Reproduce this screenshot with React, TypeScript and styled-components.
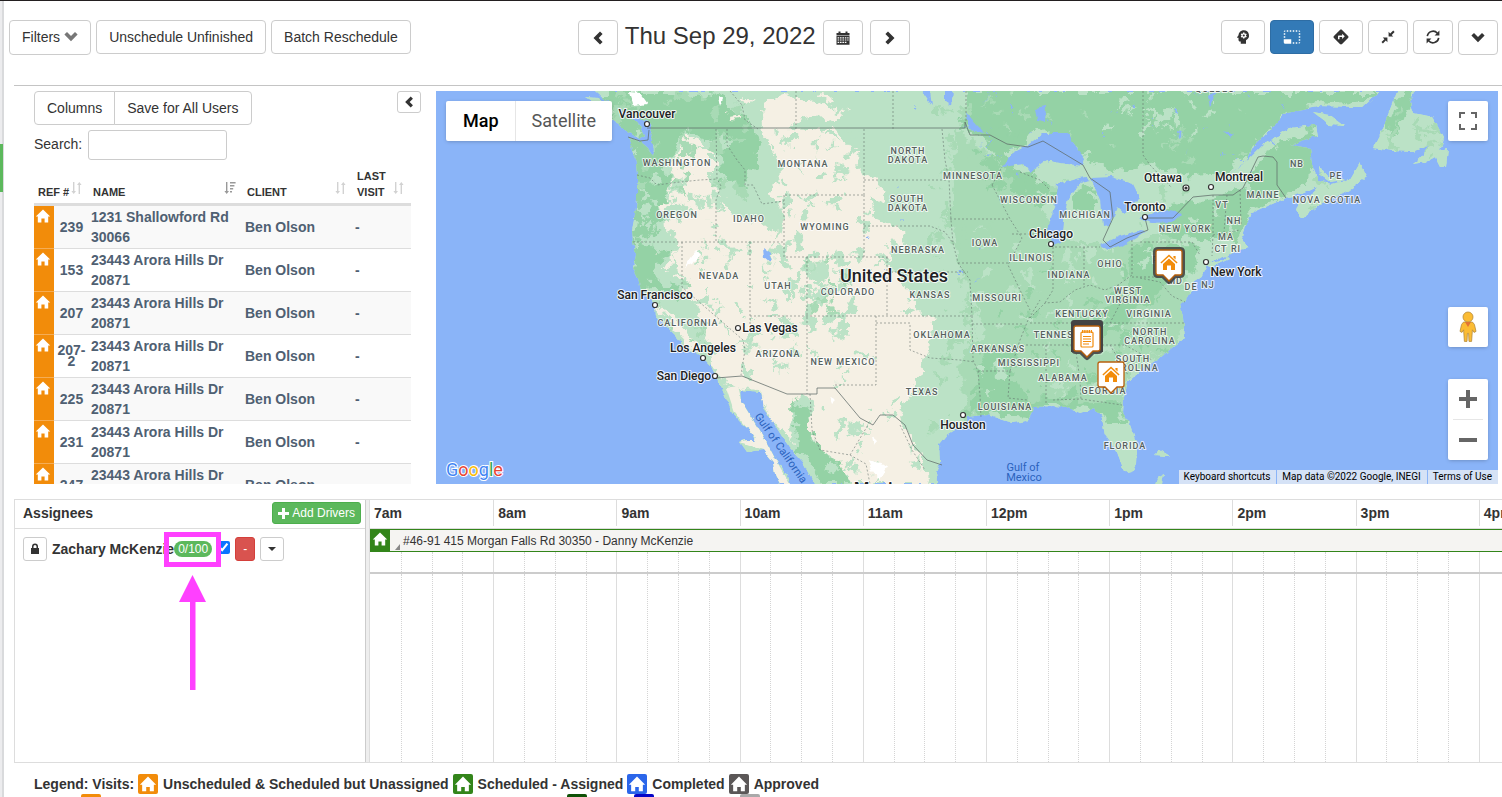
import React from 'react';
import styled, { createGlobalStyle, css } from 'styled-components';
import { MdPsychology, MdPhotoSizeSelectSmall, MdDirections } from 'react-icons/md';

const GlobalStyle = createGlobalStyle`
  *, *::before, *::after { box-sizing: border-box; }
  html, body { margin: 0; background: #fff; }
  body, button, input {
    font-family: "Liberation Sans", Arial, Helvetica, sans-serif;
    font-size: 14px;
    line-height: 20px;
    color: #333;
  }
  body { overflow-x: hidden; }
`;

/* ---------- page frame ---------- */

const Page = styled.div`
  display: flex;
  min-height: 100vh;
  border-top: 1px solid #231f20;
`;
const Rail = styled.aside`
  flex: none;
  width: 4px;
  padding-top: 143px;
  background: #ececee;
  border-right: 2px solid #d9dadc;
`;
const RailMarker = styled.div`
  width: 3px;
  height: 48px;
  background: #5cb85c;
  position: relative;
`;
const Main = styled.main`
  flex: 1;
  min-width: 0;
  overflow: hidden;
`;

/* ---------- buttons ---------- */

const Button = styled.button<{ $active?: boolean; $tall?: boolean; $square?: boolean }>`
  display: inline-flex;
  align-items: center;
  justify-content: center;
  gap: 4px;
  height: ${p => (p.$tall ? 35 : 34)}px;
  padding: 0 12px 1px;
  ${p => p.$square && css`width: 40px; padding: 0;`}
  border: 1px solid ${p => (p.$active ? '#2e6da4' : '#ccc')};
  border-radius: 4px;
  background: ${p => (p.$active ? '#337ab7' : '#fff')};
  color: ${p => (p.$active ? '#fff' : '#333')};
  white-space: nowrap;
`;
const SmallButton = styled.button<{ $tone?: 'danger' | 'plain'; $width: number }>`
  display: inline-flex;
  align-items: center;
  justify-content: center;
  flex: none;
  width: ${p => p.$width}px;
  height: 24px;
  padding: 0;
  border: 1px solid ${p => (p.$tone === 'danger' ? '#d43f3a' : '#ccc')};
  border-radius: 3px;
  background: ${p => (p.$tone === 'danger' ? '#d9534f' : '#fff')};
  color: ${p => (p.$tone === 'danger' ? '#fff' : '#333')};
  font-size: 12px;
`;
const ButtonGroup = styled.div`
  display: flex;
  ${Button}:first-child { border-radius: 4px 0 0 4px; }
  ${Button}:last-child { border-radius: 0 4px 4px 0; margin-left: -1px; }
`;

/* ---------- toolbar ---------- */

const Toolbar = styled.header`
  display: grid;
  grid-template-columns: 29fr auto 30fr;
  height: 84px;
  padding: 19px 4px 0 5px;
`;
const ToolGroup = styled.div<{ $end?: boolean }>`
  display: flex;
  align-items: flex-start;
  gap: 5px;
  justify-content: ${p => (p.$end ? 'flex-end' : 'flex-start')};
`;
const DateNav = styled.div`
  display: flex;
  gap: 7px;
`;
const DateTitle = styled.h1`
  margin: 0;
  font-size: 24px;
  line-height: 32px;
  font-weight: 400;
`;

/* ---------- upper area ---------- */

const Upper = styled.section`
  display: flex;
  gap: 15px;
  margin-left: 10px;
  padding: 5px 4px 15px 20px;
  border-top: 1px solid #c4c4c4;
`;
const VisitPanel = styled.div`
  flex: none;
  width: 387px;
  height: 393px;
  overflow: hidden;
`;
const PanelHead = styled.div`
  display: flex;
  align-items: flex-start;
  justify-content: space-between;
`;
const CollapseButton = styled(SmallButton)`
  height: 22px;
`;
const SearchRow = styled.label`
  display: flex;
  gap: 6px;
  margin: 5px 0 8px;
  line-height: 28px;
`;
const SearchInput = styled.input`
  width: 139px;
  height: 30px;
  padding: 4px 8px;
  border: 1px solid #ccc;
  border-radius: 3px;
  background: #fff;
`;
const Table = styled.table`
  width: 377px;
  table-layout: fixed;
  border-collapse: separate;
  border-spacing: 0;
`;
const HeadCell = styled.th`
  padding: 0 7px 3px 4px;
  border-bottom: 3px solid #ddd;
  text-align: left;
  vertical-align: bottom;
`;
const SortButton = styled.button`
  display: flex;
  width: 100%;
  align-items: flex-end;
  justify-content: space-between;
  padding: 0;
  border: 0;
  background: none;
  font-size: 11px;
  line-height: 16px;
  font-weight: 700;
  text-align: left;
  svg { flex: none; margin-bottom: 6px; }
`;
const VisitRow = styled.tr<{ $odd: boolean }>`
  background: ${p => (p.$odd ? '#f9f9f9' : '#fff')};
`;
const Cell = styled.td<{ $center?: boolean }>`
  padding: 1px ${p => (p.$center ? 0 : 2)}px;
  border-bottom: 1px solid #ddd;
  color: #4f6072;
  font-weight: 700;
  line-height: ${p => (p.$center ? 11 : 20)}px;
  text-align: ${p => (p.$center ? 'center' : 'left')};
  vertical-align: middle;
  overflow-wrap: break-word;
`;
const StatusCell = styled.td`
  padding: 2px 2px 0 1px;
  border-bottom: 1px solid #f5ad55;
  background: #f28c0a;
  vertical-align: top;
  line-height: 0;
`;

/* ---------- map ---------- */

const MapBox = styled.div`
  position: relative;
  flex: 1;
  min-width: 0;
  height: 393px;
  overflow: hidden;
  background: #8ab4f8;
  font-family: Roboto, "Liberation Sans", sans-serif;
  button, a { font-family: Roboto, "Liberation Sans", sans-serif; }
`;
const MapSvg = styled.svg`
  display: block;
  width: 100%;
  height: 100%;
`;
const MapTypes = styled.div`
  position: absolute;
  left: 10px;
  top: 10px;
  display: flex;
  border-radius: 2px;
  background: #fff;
  box-shadow: 0 1px 4px -1px rgba(0, 0, 0, 0.3);
`;
const MapTypeButton = styled.button<{ $on?: boolean }>`
  height: 40px;
  padding: 0 16px 0 ${p => (p.$on ? 17 : 16)}px;
  border: 0;
  border-left: ${p => (p.$on ? 0 : '1px solid #e6e6e6')};
  background: none;
  font-size: 18px;
  font-weight: ${p => (p.$on ? 500 : 400)};
  color: ${p => (p.$on ? '#000' : '#565656')};
`;
const MapControls = styled.div`
  position: absolute;
  right: 10px;
  top: 10px;
  display: flex;
  flex-direction: column;
`;
const ControlCard = styled.div<{ $gap?: number }>`
  display: flex;
  flex-direction: column;
  align-items: center;
  width: 40px;
  margin-top: ${p => p.$gap ?? 0}px;
  border-radius: 2px;
  background: #fff;
  box-shadow: 0 1px 4px -1px rgba(0, 0, 0, 0.3);
`;
const ControlButton = styled.button`
  display: flex;
  align-items: center;
  justify-content: center;
  width: 40px;
  height: 40px;
  padding: 0;
  border: 0;
  background: none;
`;
const ControlRule = styled.div`
  width: 30px;
  height: 1px;
  background: #e6e6e6;
`;
const Attribution = styled.div`
  position: absolute;
  right: 0;
  bottom: 0;
  display: flex;
  gap: 1px;
  font-size: 10px;
  line-height: 14px;
`;
const AttributionItem = styled.span`
  padding: 0 6px 0 5px;
  background: rgba(245, 245, 245, 0.7);
  a { color: #000; text-decoration: none; }
  color: #000;
`;

/* ---------- schedule ---------- */

const Schedule = styled.section`
  display: flex;
  height: 264px;
  margin-left: 10px;
  border: 1px solid #ddd;
  border-right: 0;
`;
const Assignees = styled.div`
  position: relative;
  flex: none;
  width: 350px;
`;
const AssigneeHead = styled.div`
  display: flex;
  align-items: center;
  justify-content: space-between;
  height: 29px;
  padding: 0 4px 2px 8px;
  border-bottom: 1px solid #ddd;
  font-weight: 700;
`;
const AddButton = styled.button`
  display: flex;
  align-items: center;
  gap: 3px;
  height: 22px;
  padding: 0 5px;
  border: 1px solid #4cae4c;
  border-radius: 3px;
  background: #5cb85c;
  color: #fff;
  font-size: 12px;
`;
const AssigneeRow = styled.div`
  display: flex;
  align-items: center;
  gap: 5px;
  padding: 8px;
`;
const AssigneeName = styled.label`
  display: flex;
  align-items: center;
  font-weight: 700;
  white-space: nowrap;
`;
const Badge = styled.span`
  height: 16px;
  padding: 0 4px;
  border-radius: 8px;
  background: #5cb85c;
  color: #fff;
  font-size: 12px;
  line-height: 16px;
  font-weight: 400;
`;
const Check = styled.input`
  width: 13px;
  height: 13px;
  margin: 0 0 3px;
  accent-color: #0a75ff;
`;
const HighlightBox = styled.div`
  position: absolute;
  left: 149px;
  top: 32px;
  width: 57px;
  height: 35px;
  border: 5px solid #ff40ff;
`;
const HighlightArrow = styled.svg`
  position: absolute;
  left: 164px;
  top: 75px;
`;
const Splitter = styled.div`
  flex: none;
  width: 5px;
  border-left: 1px solid #ccc;
  border-right: 1px solid #ddd;
  background: #eee;
`;
const Timeline = styled.div`
  flex: 1;
  min-width: 0;
  display: flex;
  flex-direction: column;
  overflow: hidden;
`;
const hourColumns = css`
  display: grid;
  grid-template-columns: repeat(10, 1fr);
  width: 1232px;
`;
const HourHead = styled.div`
  flex: none;
  height: 29px;
  border-bottom: 1px solid #ddd;
`;
const HourLabels = styled.div`
  ${hourColumns}
`;
const HourLabel = styled.div`
  height: 26px;
  padding: 0 4px;
  border-left: 1px solid #ddd;
  font-weight: 700;
  line-height: 26px;
  &:first-child { border-left: 0; }
`;
const Lane = styled.div<{ $grow?: boolean }>`
  display: flex;
  flex: ${p => (p.$grow ? '1' : '0 0 22px')};
  ${p => !p.$grow && css`border-bottom: 2px solid #ccc;`}
`;
const Hours = styled.div`
  flex: none;
  ${hourColumns}
`;
const HourCell = styled.div`
  display: grid;
  grid-template-columns: repeat(4, 1fr);
`;
const Quarter = styled.div`
  border-left: 1px dotted #d4d4d4;
  &:first-child { border-left: 1px solid #ddd; }
  ${HourCell}:first-child &:first-child { border-left: 0; }
`;
const Visit = styled.div`
  display: flex;
  align-items: center;
  flex: none;
  height: 23px;
  border-top: 1px solid #33851a;
  border-bottom: 1px solid #33851a;
  background: #f5f4f2;
  font-size: 12px;
  line-height: 20px;
  white-space: nowrap;
`;
const VisitIcon = styled.div`
  display: flex;
  justify-content: center;
  align-items: center;
  width: 20px;
  height: 21px;
  padding-bottom: 3px;
  background: #33851a;
`;
const ResizeCorner = styled.svg`
  align-self: flex-end;
  margin: 0 3px 1px 5px;
`;

/* ---------- legend ---------- */

const Legend = styled.footer`
  height: 35px;
  padding: 11px 0 0 30px;
  overflow: hidden;
`;
const LegendRow = styled.div`
  display: flex;
  gap: 4px;
  height: 20px;
  font-weight: 700;
  white-space: nowrap;
`;
const LegendItem = styled.span`
  display: flex;
  gap: 5px;
`;
const Swatch = styled.span<{ $color: string; $lead?: number }>`
  display: flex;
  align-items: center;
  justify-content: center;
  flex: none;
  width: 20px;
  height: 20px;
  margin-left: ${p => p.$lead ?? 0}px;
  border-radius: 2px;
  background: ${p => p.$color};
`;

/* ---------- icons ---------- */

type IconProps = { size?: number; color?: string };

const House = ({ size = 16, color = '#fff' }: IconProps) => (
  <svg width={size} height={size} viewBox="0 0 16 16" fill={color} aria-hidden="true">
    <path d="M8 1.4 0.8 8.6h2v5.8h3.6v-3.8h3.2v3.8h3.6V8.6h2z" />
  </svg>
);
const ChevronLeft = ({ size = 14 }: IconProps) => (
  <svg width={size} height={size} viewBox="0 0 14 14" fill="#333" aria-hidden="true">
    <path d="M9 0.5 11.6 3.1 7.7 7l3.9 3.9L9 13.5 2.5 7z" />
  </svg>
);
const ChevronRight = () => (
  <svg width="14" height="14" viewBox="0 0 14 14" fill="#333" aria-hidden="true">
    <path d="M5 0.5 2.4 3.1 6.3 7l-3.9 3.9L5 13.5 11.5 7z" />
  </svg>
);
const ChevronDown = ({ color = '#333' }: IconProps) => (
  <svg width="14" height="14" viewBox="0 0 14 14" fill={color} aria-hidden="true">
    <path d="M0.4 4.6 3 2l4 4 4-4 2.6 2.6L7 11.2z" />
  </svg>
);
const Calendar = () => (
  <svg width="14" height="14" viewBox="0 0 14 14" fill="#333" aria-hidden="true">
    <path d="M0.5 2h2V0.6h2V2h5V0.6h2V2h2v2.4h-13z" />
    <path
      fillRule="evenodd"
      d="M0.5 5h13v8.8h-13zM1.6 6.2v1.2h1.6V6.2zm2.4 0v1.2h1.6V6.2zm2.4 0v1.2H8V6.2zm2.4 0v1.2h1.6V6.2zm2.4 0v1.2h1.4V6.2zM1.6 8.4v1.2h1.6V8.4zm2.4 0v1.2h1.6V8.4zm2.4 0v1.2H8V8.4zm2.4 0v1.2h1.6V8.4zm2.4 0v1.2h1.4V8.4zM1.6 10.8V12h1.6v-1.2zm2.4 0V12h1.6v-1.2zm2.4 0V12H8v-1.2zm2.4 0V12h1.6v-1.2z"
    />
  </svg>
);
const ResizeSmall = () => (
  <svg width="14" height="14" viewBox="0 0 14 14" fill="#333" aria-hidden="true">
    <path d="M7.6 6.4V1.8l1.6 1.6L12.2 0.6l1.4 1.4-2.9 2.9 1.5 1.5zM6.4 7.6H1.8l1.6 1.6L0.5 12.1l1.4 1.4L4.8 10.6l1.6 1.6z" />
  </svg>
);
const Refresh = () => (
  <svg width="14" height="14" viewBox="0 0 14 14" aria-hidden="true">
    <g fill="none" stroke="#333" strokeWidth="1.6">
      <path d="M1.3 6.2A5.8 5.8 0 0 1 11.4 3.2" />
      <path d="M12.7 7.8A5.8 5.8 0 0 1 2.6 10.8" />
    </g>
    <path fill="#333" d="M13.4 0.4v5H8.6zM0.6 13.6v-5h4.8z" />
  </svg>
);
const Lock = () => (
  <svg width="12" height="12" viewBox="0 0 12 12" fill="#333" aria-hidden="true">
    <path fillRule="evenodd" d="M3 5V3.6a3 3 0 0 1 6 0V5h1v6H2V5zm1.5 0h3V3.6a1.5 1.5 0 0 0-3 0z" />
  </svg>
);
const Plus = () => (
  <svg width="11" height="11" viewBox="0 0 11 11" fill="#fff" aria-hidden="true">
    <path d="M4 0h3v4h4v3H7v4H4V7H0V4h4z" />
  </svg>
);
const Caret = () => (
  <svg width="8" height="4" viewBox="0 0 8 4" fill="#333" aria-hidden="true">
    <path d="M0 0h8L4 4z" />
  </svg>
);
const SortBoth = () => (
  <svg width="11" height="12" viewBox="0 0 11 12" fill="#d2d2d2" aria-hidden="true">
    <path d="M2 0h1.4v9H5L2.7 12 0.4 9H2zM7.6 12H9V3h1.6L8.3 0 6 3h1.6z" />
  </svg>
);
const SortActive = () => (
  <svg width="12" height="12" viewBox="0 0 12 12" fill="#999" aria-hidden="true">
    <path d="M2 0h1.4v9H5L2.7 12 0.4 9H2zM6 0h5.6v1.6H6zM6 3h4.4v1.6H6zM6 6h3.2v1.6H6zM6 9h2v1.6H6z" />
  </svg>
);
const FullscreenIcon = () => (
  <svg width="18" height="18" viewBox="0 0 18 18" fill="#666" aria-hidden="true">
    <path d="M0 0h6v2H2v4H0zM12 0h6v6h-2V2h-4zM0 12h2v4h4v2H0zM16 12h2v6h-6v-2h4z" />
  </svg>
);
const Pegman = () => (
  <svg width="18" height="32" viewBox="0 0 18 32" aria-hidden="true">
    <path
      d="M4.6 11h8.8l2 2.4 1.6 7-2 1-1.6-2.6-.8 11.6H10l-.4-8H8.4l-.4 8H5.4L4.6 18.8 3 21.4l-2-1 1.6-7z"
      fill="#fbbc34"
      stroke="#b58a3a"
      strokeWidth="0.8"
    />
    <circle cx="9" cy="6" r="5" fill="#fbbc34" stroke="#b58a3a" strokeWidth="0.8" />
    <path d="M6 11h6l-3 5z" fill="#e27435" />
  </svg>
);
const ZoomIn = () => (
  <svg width="18" height="18" viewBox="0 0 18 18" fill="#666" aria-hidden="true">
    <path d="M7 0h4v7h7v4h-7v7H7v-7H0V7h7z" />
  </svg>
);
const ZoomOut = () => (
  <svg width="18" height="4" viewBox="0 0 18 4" fill="#666" aria-hidden="true">
    <path d="M0 0h18v4H0z" />
  </svg>
);

/* ---------- map drawing ---------- */

const BEIGE = '#f5f0e4';
const LIGHT = '#bbe2c6';
const MID = '#a8dab5';
const DARK = '#94d2a5';
const WATER = '#8ab4f8';

const MAINLAND =
  'M596 91 606 100 618 108 634 116 648 121 652 130 650 138 655 150 653 157 648 148 640 141 630 138 632 150 636 163 637 175 637 200 635 215 632 230 633 242 636 254 633 268 638 278 641 290 648 298 655 305 656 315 662 322 670 330 678 338 686 350 696 352 703 358 711 366 716 377 722 388 728 403 732 413 742 424 750 430 755 440 745 440 740 442 747 452 763 450 773 462 775 474 780 484 790 484 788 476 777 462 767 443 758 428 750 415 742 402 741 390 760 392 763 408 773 422 783 438 790 448 803 462 810 475 815 484 937 484 936 472 940 463 939 445 947 435 963 425 968 418 987 415 997 418 1013 423 1027 421 1031 415 1033 407 1053 406 1067 407 1080 413 1095 408 1102 418 1105 435 1117 452 1123 468 1130 474 1136 465 1137 445 1130 425 1122 412 1123 398 1128 382 1145 367 1160 358 1173 347 1185 338 1183 318 1180 303 1186 300 1192 290 1193 282 1203 275 1207 264 1225 260 1229 255 1238 250 1249 248 1242 238 1245 225 1252 213 1270 205 1286 198 1303 193 1317 186 1312 195 1298 203 1295 211 1302 218 1320 204 1343 194 1367 177 1360 163 1350 180 1332 184 1318 180 1312 165 1310 148 1290 145 1304 140 1317 136 1315 125 1290 128 1263 145 1243 165 1226 176 1246 162 1254 146 1273 127 1287 112 1317 106 1363 107 1380 91Z';
const ISLANDS =
  'M585 97 598 98 612 104 640 125 645 136 640 139 625 130 610 118 597 104ZM1397 91 1383 128 1373 148 1395 151 1413 152 1430 145 1420 158 1412 164 1426 162 1435 157 1440 167 1446 167 1448 148 1440 150 1444 138 1437 125 1432 117 1413 113 1410 104 1414 91ZM1313 112 1330 115 1345 126 1330 125ZM1319 166 1328 176 1345 180 1330 182 1320 175ZM1207 263 1226 256 1229 259 1210 268ZM1155 455 1160 450 1170 456 1164 456ZM1157 478 1164 474 1162 484 1155 484Z';
const ARID =
  'M762 112 772 96 800 98 846 112 830 118 800 122 785 128 837 130 857 152 863 172 885 192 877 218 913 235 890 252 890 268 913 292 918 312 937 318 927 352 917 378 905 405 900 418 913 438 922 458 930 484 855 484 840 470 820 452 806 425 812 400 800 396 790 420 794 440 770 418 763 405 760 392 740 388 716 376 712 350 702 322 693 298 682 278 678 252 667 225 665 205 670 182 677 152 690 132 713 152 713 182 724 197 732 215 758 220 775 235 785 215 772 190 783 170 768 145Z';
const BAJA = 'M726 388 738 386 742 402 750 415 758 428 767 443 777 462 790 484 780 484 763 450 740 442 755 438 734 412Z';
const VALLEY = 'M658 308 664 306 680 325 697 345 700 354 690 350 676 332Z';
const FORESTS = [
  'M596 91 680 91 716 96 738 110 752 126 762 142 755 165 745 190 722 180 714 140 690 128 674 145 668 180 664 215 650 240 632 242 637 180 628 138Z',
  'M636 242 655 246 672 252 660 262 650 278 680 290 676 296 654 288 640 290 632 268Z',
  'M966 91 1380 91 1360 106 1317 104 1287 112 1255 146 1226 176 1190 178 1165 165 1110 172 1085 155 1060 130 1040 132 1000 160 985 140 960 130Z',
  'M1005 165 1030 172 1046 185 1056 190 1050 205 1030 200 1010 188Z',
  'M1070 190 1096 182 1098 205 1080 212Z',
  'M1155 205 1213 200 1245 188 1262 150 1317 128 1310 185 1250 210 1236 238 1200 240 1165 236Z',
  'M1134 246 1194 244 1198 264 1170 278 1150 300 1120 330 1080 350 1070 345 1100 310 1128 285Z',
  'M985 350 1020 350 1010 372 1030 400 1060 398 1080 405 1120 402 1128 425 1110 425 1095 410 1060 406 1035 408 1030 418 985 414 968 415 976 375Z',
  'M1385 125 1400 91 1412 91 1405 120 1395 140Z',
  'M795 398 806 412 812 440 840 466 850 484 826 484 800 448 796 425Z',
];
const PRAIRIE =
  'M955 130 1000 160 1040 190 1050 235 1100 245 1170 235 1190 300 1180 340 1125 385 1125 405 1035 407 968 418 958 370 985 330 962 270 950 215Z';
const LAKES =
  'M1002 167 1013 153 1028 145 1043 133 1067 133 1072 141 1085 158 1083 166 1060 163 1047 160 1030 172 1024 164ZM1057 185 1054 208 1048 228 1053 246 1061 243 1063 222 1068 198 1081 182 1091 180 1084 177 1066 182ZM1091 178 1100 200 1103 226 1110 225 1117 208 1124 214 1140 198 1133 184 1112 177ZM1100 245 1108 250 1123 246 1147 231 1140 230 1120 236ZM1139 218 1150 223 1173 222 1181 214 1170 210 1150 214ZM1036 108 1046 106 1045 122 1038 120ZM922 91 932 105 930 91ZM945 91 953 91 951 106 945 102ZM966 112 976 124 985 133 970 130ZM763 248 771 254 770 262 764 257ZM1224 131 1234 135 1230 138ZM1208 96 1216 91 1210 108Z';
const SALT = 'M685 267 695 252 700 254 692 264ZM629 92 640 93 648 104 634 106ZM829 396 836 400 832 404ZM868 460 888 466 880 480 872 470ZM872 436 877 440 874 446ZM718 96 723 98 720 106Z';

const SOLID_BORDERS =
  'M647 128H965V122L970 135 990 135 1007 144 1028 147 1043 141 1083 165 1090 178 1110 192 1113 218 1103 240 1110 247 1127 238 1148 230 1145 218H1173L1193 197 1213 195H1233L1243 188 1258 157 1263 156 1273 157 1277 162V185L1286 198M716 378 742 376 787 394H817V388H835L860 418 873 425 880 415H893L905 425 913 445 927 460 942 465M628 137 640 141 648 140 649 130';
const STATE_BORDERS =
  'M637 175 650 178 657 185 680 182 700 180 717 179M716 129 717 179 721 186 716 200V242M633 242H784M682 242V287L743 340 745 350 741 375M750 242V325M727 129V145L737 160 745 170 745 185 753 185 762 204 784 201M785 195H864M784 195V257H890M864 195V257M807 257V394M750 316H971M876 316V385M835 385H876M876 323H910V350L930 358 960 360 975 362M887 257V316M887 272H968M864 129V195M864 180H947M864 226H930L945 232 953 243 958 263 970 280 972 316M942 129 945 160 949 180 951 220 953 243M950 219H1010M958 263H1008M972 324H1022M978 371H1010M972 316 973 360 978 371 980 395 981 418M1010 371 1020 340 1028 320 1040 300M1012 234H1050M992 185 1000 200 1010 219 1022 238 1008 265 1020 290 1030 310M1010 371 1008 398 1027 400M992 185 1002 167M1053 247V290L1045 303M1084 247V285M1132 240V275M1055 247H1100M1030 318 1045 303 1060 302 1075 290 1090 285 1105 290 1118 285 1132 275M1030 323H1185M1026 345H1125M1046 345V405M1075 345 1080 380 1081 400M1053 400 1081 399 1122 405M1125 345 1152 360M1110 345 1128 375M1140 242H1192L1200 255M1132 277H1180M1118 285 1122 300 1110 323M1140 278 1160 282 1172 296 1185 302M1213 235 1240 230M1213 195V235L1212 256M1227 195 1224 232M1240 190 1241 225M966 91V122M893 91V129M796 91V129M1143 91V155L1150 165 1172 188M1020 172 1040 180 1050 190M730 91 742 105 745 120 758 129M810 394 812 430 820 450 850 455 868 425M850 455 866 464 870 484M900 425 912 450 925 470';

/* Seeded generator, so the ground cover is the same on every render. */
function random(seed: number) {
  let s = seed;
  return () => {
    s = (s * 16807) % 2147483647;
    return s / 2147483647;
  };
}
function cover(seed: number, x: number, y: number, w: number, h: number, count: number, size: number) {
  const next = random(seed);
  let d = '';
  for (let i = 0; i < count; i++) {
    const cx = x + next() * w;
    const cy = y + next() * h;
    const tilt = next() * Math.PI;
    const long = size * (0.5 + next());
    const n = 6 + Math.floor(next() * 4);
    for (let k = 0; k < n; k++) {
      const a = (k / n) * Math.PI * 2;
      const r = 0.4 + next() * 0.8;
      const px = Math.cos(a) * long * r;
      const py = Math.sin(a) * long * 0.5 * r;
      const qx = cx + px * Math.cos(tilt) - py * Math.sin(tilt);
      const qy = cy + px * Math.sin(tilt) + py * Math.cos(tilt);
      d += `${k ? 'L' : 'M'}${qx.toFixed(1)} ${qy.toFixed(1)}`;
    }
    d += 'Z';
  }
  return d;
}
const COVER = [
  { fill: LIGHT, d: cover(11, 668, 145, 60, 120, 26, 7) },
  { fill: LIGHT, d: cover(12, 770, 130, 95, 90, 30, 7) },
  { fill: LIGHT, d: cover(13, 700, 240, 80, 90, 26, 5) },
  { fill: LIGHT, d: cover(14, 770, 225, 30, 130, 20, 8) },
  { fill: LIGHT, d: cover(15, 808, 258, 44, 66, 30, 10) },
  { fill: MID, d: cover(16, 812, 262, 34, 54, 12, 6) },
  { fill: LIGHT, d: cover(17, 745, 325, 60, 60, 12, 6) },
  { fill: LIGHT, d: cover(18, 815, 320, 90, 90, 12, 5) },
  { fill: LIGHT, d: cover(19, 860, 200, 60, 110, 16, 8) },
  { fill: LIGHT, d: cover(20, 830, 405, 90, 79, 20, 7) },
  { fill: BEIGE, d: cover(21, 735, 91, 110, 34, 10, 8) },
  { fill: MID, d: cover(22, 600, 95, 150, 95, 40, 8) },
  { fill: LIGHT, d: cover(23, 635, 130, 40, 120, 14, 6) },
  { fill: BEIGE, d: cover(24, 655, 250, 30, 30, 5, 5) },
  { fill: MID, d: cover(25, 645, 280, 60, 70, 14, 5) },
  { fill: MID, d: cover(26, 930, 100, 50, 330, 50, 7) },
  { fill: LIGHT, d: cover(27, 970, 180, 200, 220, 60, 7) },
  { fill: DARK, d: cover(28, 1000, 270, 180, 130, 40, 7) },
  { fill: DARK, d: cover(33, 975, 130, 70, 60, 20, 8) },
  { fill: MID, d: cover(29, 975, 91, 380, 140, 40, 6) },
  { fill: LIGHT, d: cover(30, 1110, 91, 100, 40, 20, 6) },
  { fill: LIGHT, d: cover(31, 1100, 185, 160, 90, 20, 5) },
  { fill: MID, d: cover(32, 1380, 100, 60, 60, 16, 7) },
  { fill: WATER, d: cover(35, 980, 95, 310, 80, 36, 2) },
  { fill: WATER, d: cover(36, 870, 95, 130, 190, 14, 2) },
];

const STATES: [string, number, number][] = [
  ['WASHINGTON', 676, 163], ['OREGON', 676, 215], ['IDAHO', 748, 219], ['MONTANA', 802, 164],
  ['WYOMING', 824, 227], ['NEVADA', 718, 276], ['UTAH', 777, 286], ['COLORADO', 847, 292],
  ['CALIFORNIA', 687, 323], ['ARIZONA', 777, 354], ['NEW MEXICO', 842, 362], ['NORTH', 907, 151],
  ['DAKOTA', 907, 160], ['SOUTH', 906, 199], ['DAKOTA', 907, 208], ['NEBRASKA', 917, 250],
  ['KANSAS', 929, 295], ['OKLAHOMA', 941, 335], ['TEXAS', 921, 392], ['MINNESOTA', 972, 176],
  ['WISCONSIN', 1028, 200], ['MICHIGAN', 1084, 215], ['IOWA', 984, 243], ['ILLINOIS', 1030, 258],
  ['INDIANA', 1068, 275], ['OHIO', 1109, 264], ['MISSOURI', 996, 298], ['ARKANSAS', 997, 349],
  ['MISSISSIPPI', 1028, 363], ['ALABAMA', 1062, 378], ['LOUISIANA', 1004, 407], ['KENTUCKY', 1081, 314],
  ['TENNESSEE', 1062, 335], ['WEST', 1127, 291], ['VIRGINIA', 1127, 300], ['VIRGINIA', 1148, 314],
  ['NORTH', 1149, 332], ['CAROLINA', 1149, 341], ['SOUTH', 1132, 359], ['CAROLINA', 1132, 368],
  ['GEORGIA', 1103, 391], ['FLORIDA', 1124, 446], ['NEW YORK', 1184, 229], ['PA', 1158, 260],
  ['MD', 1174, 281], ['DE', 1190, 287], ['NJ', 1207, 285], ['CT', 1220, 249], ['RI', 1235, 249],
  ['MA', 1225, 237], ['NH', 1233, 221], ['VT', 1221, 205], ['MAINE', 1262, 195], ['NB', 1296, 164],
  ['PE', 1335, 176], ['NOVA SCOTIA', 1326, 200], ['QUEBEC', 1214, 89],
];
const CITIES: [string, number, number, number, number][] = [
  ['Vancouver', 647, 114, 647, 124], ['San Francisco', 655, 295, 655, 305],
  ['Las Vegas', 770, 328, 738, 328], ['Los Angeles', 703, 348, 703, 358],
  ['San Diego', 684, 376, 715, 376], ['Chicago', 1051, 234, 1051, 244],
  ['Houston', 963, 425, 963, 415], ['Toronto', 1145, 207, 1145, 217],
  ['Montreal', 1239, 177, 1211, 187], ['New York', 1236, 272, 1206, 262],
];

const Marker = ({ x, y, halo, children }: { x: number; y: number; halo?: boolean; children: React.ReactNode }) => {
  const pin = 'M-11 -32H11Q13 -32 13 -30V-9Q13 -7 11 -7H6L0 -1 -6 -7H-11Q-13 -7 -13 -9V-30Q-13 -32 -11 -32Z';
  return (
    <g transform={`translate(${x} ${y})`}>
      {halo && <path d={pin} fill="none" stroke="#444" strokeWidth="6" strokeLinejoin="round" strokeOpacity="0.9" />}
      <path d={pin} fill="#fff" stroke="#b8600c" strokeWidth="1.3" />
      {children}
    </g>
  );
};
const PinHouse = () => (
  <path
    fill="#f28c0a"
    d="M0 -27.5 8.6 -19.6 7.6 -18.4 0 -25.4 -7.6 -18.4 -8.6 -19.6ZM4.4 -26H6.6V-22.4L4.4 -24.4ZM0 -23.6 6 -18V-12H2V-16.6H-2V-12H-6V-18Z"
  />
);
const PinNote = () => (
  <g fill="none" stroke="#f28c0a">
    <rect x="-6" y="-26" width="12" height="15" rx="1" strokeWidth="1.2" />
    <path d="M-4 -21.5H4M-4 -19H4M-4 -16.5H4M-4 -14H2" strokeWidth="1.2" />
    <path d="M-5 -26.5H5" strokeWidth="3" strokeDasharray="1.4 0.8" />
  </g>
);

const CountryMap = () => (
  <MapSvg viewBox="436 91 1062 393" preserveAspectRatio="xMidYMid slice" role="img" aria-label="Map of the United States">
    <defs>
      <filter id="coast" x="0" y="0" width="100%" height="100%">
        <feTurbulence type="fractalNoise" baseFrequency="0.15" numOctaves="2" seed="4" />
        <feDisplacementMap in="SourceGraphic" scale="5" xChannelSelector="R" yChannelSelector="G" />
      </filter>
      <filter id="ground" x="0" y="0" width="100%" height="100%">
        <feTurbulence type="fractalNoise" baseFrequency="0.07" numOctaves="3" seed="9" />
        <feDisplacementMap in="SourceGraphic" scale="22" xChannelSelector="R" yChannelSelector="G" />
      </filter>
      <clipPath id="land">
        <path d={MAINLAND + ISLANDS} />
      </clipPath>
    </defs>
    <rect x="436" y="91" width="1062" height="393" fill={WATER} />
    <g filter="url(#coast)">
      <path d={MAINLAND + ISLANDS} fill={LIGHT} />
      <g clipPath="url(#land)">
        <g filter="url(#ground)">
          <path d="M400 60H1540V520H400Z" fill={LIGHT} />
          <path d={PRAIRIE} fill={MID} />
          <path d={ARID + VALLEY} fill={BEIGE} />
          {FORESTS.map(d => <path key={d} d={d} fill={DARK} />)}
          {COVER.map(c => <path key={c.d} d={c.d} fill={c.fill} />)}
        </g>
        <path d={BAJA} fill={BEIGE} />
        <path d={SALT} fill="#fff" />
      </g>
      <path d={LAKES} fill={WATER} />
    </g>
    <g fill="none" stroke="#5f6b68" strokeOpacity="0.75">
      <path d={STATE_BORDERS} strokeDasharray="2 2" strokeOpacity="0.55" />
      <path d={SOLID_BORDERS} />
    </g>
    <g
      fontSize="9"
      fontWeight="500"
      letterSpacing="1"
      textAnchor="middle"
      fill="#55605c"
      stroke="#fff"
      strokeOpacity="0.75"
      strokeWidth="2"
      strokeLinejoin="round"
      paintOrder="stroke"
    >
      {STATES.map(([name, x, y]) => (
        <text key={name + x} x={x + 1} y={y + 3}>{name}</text>
      ))}
    </g>
    <g
      fontSize="12"
      fontWeight="500"
      textAnchor="middle"
      fill="#202124"
      stroke="#fff"
      strokeOpacity="0.85"
      strokeWidth="2"
      strokeLinejoin="round"
      paintOrder="stroke"
    >
      {CITIES.map(([name, x, y]) => (
        <text key={name} x={x} y={y + 4}>{name}</text>
      ))}
      <text x="1163" y="182">Ottawa</text>
      <text x="894" y="282" fontSize="18">United States</text>
      <text x="883" y="495" fontSize="18">Mexico</text>
    </g>
    <g fill="#fff" stroke="#333" strokeWidth="1.2">
      {CITIES.map(([name, , , cx, cy]) => <circle key={name} cx={cx} cy={cy} r="2.5" />)}
      <circle cx="1186" cy="188" r="3" />
      <circle cx="1186" cy="188" r="1" fill="#000" />
    </g>
    <g fill="#2a62bd" fontSize="11" textAnchor="middle">
      <text x="1023" y="471">Gulf of</text>
      <text x="1024" y="481">Mexico</text>
      <text transform="translate(778 450) rotate(55)">Gulf of California</text>
    </g>
    <Marker x={1169} y={282} halo><PinHouse /></Marker>
    <path d="M1074 320H1100Q1103 320 1103 323V352H1071V323Q1071 320 1074 320Z" fill="#444" />
    <Marker x={1087} y={358} halo><PinNote /></Marker>
    <Marker x={1111} y={394}><PinHouse /></Marker>
    <text x="446" y="476" fontSize="18" stroke="#fff" strokeWidth="2" paintOrder="stroke">
      <tspan fill="#4285f4">G</tspan>
      <tspan fill="#ea4335">o</tspan>
      <tspan fill="#fbbc05">o</tspan>
      <tspan fill="#4285f4">g</tspan>
      <tspan fill="#34a853">l</tspan>
      <tspan fill="#ea4335">e</tspan>
    </text>
  </MapSvg>
);

/* ---------- data ---------- */

const VISITS = [
  ['239', '1231 Shallowford Rd 30066'],
  ['153', '23443 Arora Hills Dr 20871'],
  ['207', '23443 Arora Hills Dr 20871'],
  ['207-2', '23443 Arora Hills Dr 20871'],
  ['225', '23443 Arora Hills Dr 20871'],
  ['231', '23443 Arora Hills Dr 20871'],
  ['247', '23443 Arora Hills Dr 20871'],
];
const HOURS = ['7am', '8am', '9am', '10am', '11am', '12pm', '1pm', '2pm', '3pm', '4pm'];
const LEGEND = [
  ['Unscheduled & Scheduled but Unassigned', '#f28c0a'],
  ['Scheduled - Assigned', '#33851a'],
  ['Completed', '#2b66ea'],
  ['Approved', '#5b5757'],
];

const HourGrid = () => (
  <Hours>
    {HOURS.map(h => (
      <HourCell key={h}>
        <Quarter /><Quarter /><Quarter /><Quarter />
      </HourCell>
    ))}
  </Hours>
);

export default function App() {
  return (
    <>
      <GlobalStyle />
      <Page>
        <Rail><RailMarker /></Rail>
        <Main>
          <Toolbar>
            <ToolGroup>
              <Button $tall>Filters <ChevronDown color="#777" /></Button>
              <Button>Unschedule Unfinished</Button>
              <Button>Batch Reschedule</Button>
            </ToolGroup>
            <DateNav>
              <Button $square $tall aria-label="Previous day"><ChevronLeft /></Button>
              <DateTitle>Thu Sep 29, 2022</DateTitle>
              <Button $square $tall aria-label="Pick a date"><Calendar /></Button>
              <Button $square $tall aria-label="Next day"><ChevronRight /></Button>
            </DateNav>
            <ToolGroup $end>
              <Button aria-label="Auto schedule"><MdPsychology size={18} /></Button>
              <Button $active aria-label="Select area"><MdPhotoSizeSelectSmall size={18} /></Button>
              <Button aria-label="Directions"><MdDirections size={18} /></Button>
              <Button $square aria-label="Compact view"><ResizeSmall /></Button>
              <Button $square aria-label="Refresh"><Refresh /></Button>
              <Button $square $tall aria-label="More"><ChevronDown /></Button>
            </ToolGroup>
          </Toolbar>

          <Upper>
            <VisitPanel>
              <PanelHead>
                <ButtonGroup>
                  <Button>Columns</Button>
                  <Button>Save for All Users</Button>
                </ButtonGroup>
                <CollapseButton $width={24} aria-label="Collapse list"><ChevronLeft size={12} /></CollapseButton>
              </PanelHead>
              <SearchRow>Search:<SearchInput type="text" /></SearchRow>
              <Table>
                <colgroup>
                  <col style={{ width: 20 }} />
                  <col style={{ width: 35 }} />
                  <col style={{ width: 154 }} />
                  <col style={{ width: 110 }} />
                  <col />
                </colgroup>
                <thead>
                  <tr>
                    <HeadCell colSpan={2}><SortButton>REF #<SortBoth /></SortButton></HeadCell>
                    <HeadCell><SortButton>NAME<SortActive /></SortButton></HeadCell>
                    <HeadCell><SortButton>CLIENT<SortBoth /></SortButton></HeadCell>
                    <HeadCell><SortButton>LAST VISIT<SortBoth /></SortButton></HeadCell>
                  </tr>
                </thead>
                <tbody>
                  {VISITS.map(([ref, name], i) => (
                    <VisitRow key={ref} $odd={i % 2 === 0}>
                      <StatusCell><House /></StatusCell>
                      <Cell $center>{ref}</Cell>
                      <Cell>{name}</Cell>
                      <Cell>Ben Olson</Cell>
                      <Cell>-</Cell>
                    </VisitRow>
                  ))}
                </tbody>
              </Table>
            </VisitPanel>

            <MapBox>
              <CountryMap />
              <MapTypes>
                <MapTypeButton $on>Map</MapTypeButton>
                <MapTypeButton>Satellite</MapTypeButton>
              </MapTypes>
              <MapControls>
                <ControlCard><ControlButton aria-label="Full screen"><FullscreenIcon /></ControlButton></ControlCard>
                <ControlCard $gap={166}><ControlButton aria-label="Street view"><Pegman /></ControlButton></ControlCard>
                <ControlCard $gap={32}>
                  <ControlButton aria-label="Zoom in"><ZoomIn /></ControlButton>
                  <ControlRule />
                  <ControlButton aria-label="Zoom out"><ZoomOut /></ControlButton>
                </ControlCard>
              </MapControls>
              <Attribution>
                <AttributionItem><a href="#shortcuts">Keyboard shortcuts</a></AttributionItem>
                <AttributionItem>Map data ©2022 Google, INEGI</AttributionItem>
                <AttributionItem><a href="#terms">Terms of Use</a></AttributionItem>
              </Attribution>
            </MapBox>
          </Upper>

          <Schedule>
            <Assignees>
              <AssigneeHead>
                Assignees
                <AddButton><Plus />Add Drivers</AddButton>
              </AssigneeHead>
              <AssigneeRow>
                <SmallButton $width={24} aria-label="Lock"><Lock /></SmallButton>
                <AssigneeName htmlFor="assignee-zachary">
                  Zachary McKenzie<Badge>0/100</Badge>
                </AssigneeName>
                <Check id="assignee-zachary" type="checkbox" defaultChecked />
                <SmallButton $width={20} $tone="danger" aria-label="Remove">-</SmallButton>
                <SmallButton $width={24} aria-label="Options"><Caret /></SmallButton>
              </AssigneeRow>
              <HighlightBox />
              <HighlightArrow width="27" height="116" viewBox="0 0 27 116" aria-hidden="true">
                <path d="M13.5 0 27 27H16.5V115H11V27H0Z" fill="#ff40ff" />
              </HighlightArrow>
            </Assignees>
            <Splitter />
            <Timeline>
              <HourHead>
                <HourLabels>{HOURS.map(h => <HourLabel key={h}>{h}</HourLabel>)}</HourLabels>
              </HourHead>
              <Visit>
                <VisitIcon><House /></VisitIcon>
                <ResizeCorner width="5" height="6" viewBox="0 0 5 6" aria-hidden="true">
                  <path d="M5 0V6H0Z" fill="#888" />
                </ResizeCorner>
                #46-91 415 Morgan Falls Rd 30350 - Danny McKenzie
              </Visit>
              <Lane><HourGrid /></Lane>
              <Lane $grow><HourGrid /></Lane>
            </Timeline>
          </Schedule>

          <Legend>
            <LegendRow>
              <span>Legend: Visits:</span>
              {LEGEND.map(([name, color]) => (
                <LegendItem key={name}><Swatch $color={color}><House size={18} /></Swatch>{name}</LegendItem>
              ))}
            </LegendRow>
            <LegendRow>
              <Swatch $color="#f28c0a" $lead={47} />
              <Swatch $color="#0f5207" $lead={462} />
              <Swatch $color="#0606c8" $lead={43} />
              <Swatch $color="#a9a9a9" $lead={82} />
            </LegendRow>
          </Legend>
        </Main>
      </Page>
    </>
  );
}
